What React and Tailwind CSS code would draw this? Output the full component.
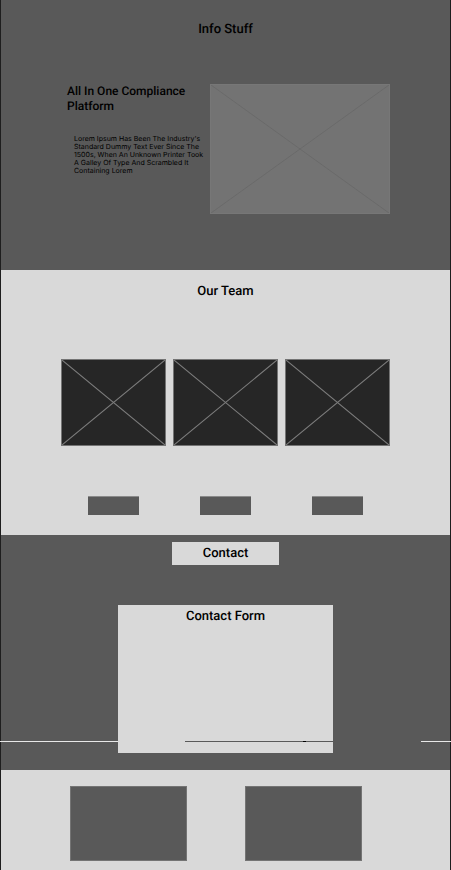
const heading = "text-[13px] leading-4 text-black text-center";

function Placeholder({ className, label }) {
  return (
    <svg
      role="img"
      aria-label={label}
      viewBox="0 0 100 100"
      preserveAspectRatio="none"
      className={`block border ${className}`}
    >
      <path
        d="M0 0L100 100M100 0L0 100"
        fill="none"
        stroke="currentColor"
        strokeWidth="1"
        vectorEffect="non-scaling-stroke"
      />
    </svg>
  );
}

function Info() {
  return (
    <section className="bg-[#595959] pt-[22px] pb-14">
      <h1 className={heading}>Info Stuff</h1>
      <div className="mt-[46px] flex pr-[60px] pl-[66px]">
        <div className="min-w-0 flex-1">
          <h2 className="text-[12px] leading-[15px] text-black">
            All In One Compliance
            <br />
            Platform
          </h2>
          <p className="mt-[21px] ml-[7px] font-['Inter',sans-serif] text-[7px] leading-2 font-normal whitespace-nowrap text-black">
            Lorem Ipsum Has Been The Industry's
            <br />
            Standard Dummy Text Ever Since The
            <br />
            1500s, When An Unknown Printer Took
            <br />
            A Galley Of Type And Scrambled It
            <br />
            Containing Lorem
          </p>
        </div>
        <Placeholder
          label="Platform preview"
          className="h-[130px] w-[180px] border-[#777777] bg-[#737373] text-[#6a6a6a]"
        />
      </div>
    </section>
  );
}

function Team() {
  const members = ["First member", "Second member", "Third member"];
  return (
    <section className="bg-[#d9d9d9] pt-[14px] pb-5">
      <h2 className={heading}>Our Team</h2>
      <ul className="mt-[59px] grid grid-cols-3 gap-[7px] px-[60px]">
        {members.map((name) => (
          <li key={name} className="flex flex-col items-center gap-[50px]">
            <Placeholder
              label={name}
              className="h-[87px] w-full border-[#747474] bg-[#262626] text-[#7c7c7c]"
            />
            <div className="h-[19px] w-[51px] border-t border-[#8a8a8a] bg-[#595959]" />
          </li>
        ))}
      </ul>
    </section>
  );
}

function Contact() {
  return (
    <section className="relative flex flex-col items-center bg-[#595959] pt-[7px] pb-[17px]">
      <h2 className={`w-[107px] bg-[#d9d9d9] pt-1 pb-[3px] ${heading}`}>Contact</h2>
      <div className="mt-10 h-[148px] w-[215px] bg-[#d9d9d9] pt-1">
        <h3 className={heading}>Contact Form</h3>
      </div>
      <div aria-hidden="true" className="absolute -inset-x-px top-[206px] flex h-px">
        <div className="w-[118px] bg-[#e8e8e8]" />
        <div className="ml-[67px] flex w-[148px] justify-end bg-[#595959] pr-[27px]">
          <div className="w-[3px] bg-black" />
        </div>
        <div className="ml-[88px] flex-1 bg-[#e8e8e8]" />
      </div>
    </section>
  );
}

function Footer() {
  return (
    <footer className="grid grid-cols-2 gap-[58px] bg-[#d9d9d9] pt-4 pr-[88px] pb-[9px] pl-[69px]">
      <div className="h-[75px] border border-[#747474] bg-[#595959]" />
      <div className="h-[75px] border border-[#747474] bg-[#595959]" />
    </footer>
  );
}

export default function App() {
  return (
    <main className="bg-[#1e1e1e] px-px font-['Roboto',sans-serif] font-medium [text-rendering:geometricPrecision]">
      <Info />
      <Team />
      <Contact />
      <Footer />
    </main>
  );
}
